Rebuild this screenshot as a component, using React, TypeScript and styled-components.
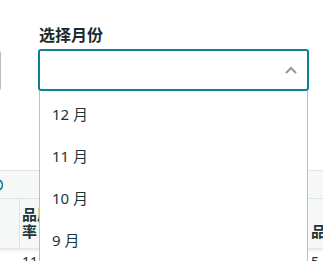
import React from "react";
import styled, { createGlobalStyle } from "styled-components";

const Global = createGlobalStyle`
  html, body { margin: 0; padding: 0; background: #ffffff; overflow: hidden; }
  body { font-family: "Noto Sans", "Noto Sans CJK SC", sans-serif; color: #1c3236; }
`;

const Page = styled.div`
  width: 323px;
  height: 261px;
  position: relative;
  overflow: hidden;
`;

const Toolbar = styled.div`
  display: flex;
  align-items: flex-end;
  gap: 37px;
  padding-top: 23px;
  margin-left: -199px;
  position: relative;
  z-index: 2;
`;

const OtherInput = styled.div`
  width: 200px;
  height: 41px;
  box-sizing: border-box;
  border: 1px solid #b7c0c1;
  border-radius: 3px;
  background: #fff;
`;

const Field = styled.div`
  display: flex;
  flex-direction: column;
  width: 271px;
`;

const Label = styled.label`
  font-family: "Noto Sans CJK SC", sans-serif;
  font-size: 16px;
  font-weight: 700;
  line-height: 22px;
  color: #182a2d;
  margin: 0 0 4px 1px;
`;

const SelectWrap = styled.div`
  position: relative;
`;

const SelectBox = styled.div`
  height: 42px;
  box-sizing: border-box;
  border: 2px solid #0b8193;
  border-radius: 3px;
  display: flex;
  align-items: center;
  justify-content: flex-end;
  padding-right: 8px;
  background: #fff;
`;

const Menu = styled.ul`
  position: absolute;
  top: 100%;
  left: 1px;
  right: 1px;
  margin: 0;
  padding: 1px 0 0;
  list-style: none;
  background: #fff;
  border: 1px solid #b8c0c1;
  border-top: none;
  height: 200px;
  box-sizing: border-box;
`;

const Item = styled.li`
  height: 42px;
  display: flex;
  align-items: center;
  padding-left: 12px;
  font-family: "Noto Sans", "Noto Sans CJK SC", sans-serif;
  font-size: 15px;
  color: #1b363b;
`;

const Table = styled.div`
  margin-top: 79px;
  border-top: 1px solid #dfe5e5;
  position: relative;
  z-index: 1;
`;

const InfoRow = styled.div`
  height: 27px;
  background: #f6f8f8;
  border-bottom: 1px solid #dfe5e5;
  display: flex;
  align-items: center;
  margin-left: -9px;
`;

const HeadRow = styled.div`
  display: grid;
  grid-template-columns: 3px 305px 1fr;
  height: 49px;
  background: #f6f8f8;
  box-shadow: 0 2px 3px rgba(0, 0, 0, 0.08);
  border-bottom: 1px solid #e2e7e7;
`;

const HeadCell = styled.div<{ $line?: boolean }>`
  border-right: ${(p) => (p.$line ? "1px solid #dfe5e5" : "none")};
  display: flex;
  align-items: flex-end;
  padding: 0 0 9px 19px;
  font-family: "Noto Sans CJK SC", sans-serif;
  font-weight: 700;
  font-size: 15px;
  line-height: 17px;
  color: #1d3438;
  white-space: nowrap;
  overflow: hidden;
`;

const BodyRow = styled.div`
  display: grid;
  grid-template-columns: 3px 305px 1fr;
  height: 30px;
  padding-top: 5px;
`;

const BodyCell = styled.div`
  padding-left: 19px;
  font-size: 14px;
  line-height: 16px;
  color: #1d3438;
  white-space: nowrap;
  overflow: hidden;
`;

const months = ["12 月", "11 月", "10 月", "9 月"];

export default function App() {
  return (
    <Page>
      <Global />
      <Toolbar>
        <OtherInput />
        <Field>
          <Label>选择月份</Label>
          <SelectWrap>
            <SelectBox>
              <svg width="16" height="10" viewBox="0 0 16 10">
                <path d="M3 8 L8 3 L13 8" fill="none" stroke="#8b9b9d" strokeWidth="2" />
              </svg>
            </SelectBox>
            <Menu>
              {months.map((m) => (
                <Item key={m}>{m}</Item>
              ))}
            </Menu>
          </SelectWrap>
        </Field>
      </Toolbar>
      <Table>
        <InfoRow>
          <svg width="12" height="14" viewBox="0 0 12 14">
            <circle cx="6" cy="7" r="5.5" fill="none" stroke="#0b8193" strokeWidth="1.6" />
          </svg>
        </InfoRow>
        <HeadRow>
          <HeadCell $line />
          <HeadCell $line>
            品质合格
            <br />
            率
          </HeadCell>
          <HeadCell style={{ paddingLeft: 3 }}>品质</HeadCell>
        </HeadRow>
        <BodyRow>
          <BodyCell />
          <BodyCell>11</BodyCell>
          <BodyCell style={{ paddingLeft: 3 }}>5</BodyCell>
        </BodyRow>
      </Table>
    </Page>
  );
}
